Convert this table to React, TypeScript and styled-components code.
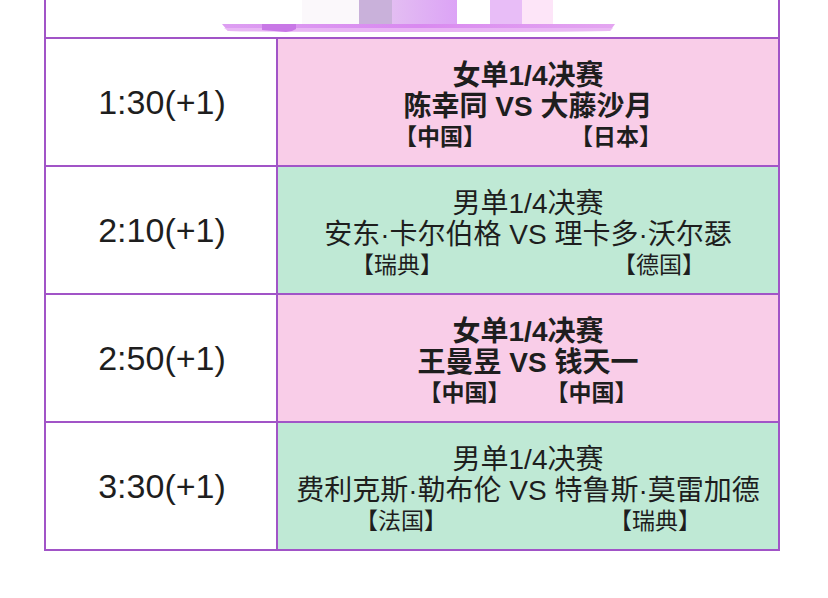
import React from "react";
import styled, { createGlobalStyle } from "styled-components";

const GlobalStyle = createGlobalStyle`
  html, body {
    margin: 0;
    padding: 0;
    background: #ffffff;
  }
  body {
    font-family: "Liberation Sans", "Noto Sans CJK SC", sans-serif;
    color: #222222;
  }
`;

const BORDER = "#a154c7";

const Page = styled.div`
  width: 828px;
  height: 598px;
  overflow: hidden;
  background: #ffffff;
`;

const Table = styled.div`
  margin-left: 44px;
  width: 736px;
  box-sizing: border-box;
  border-left: 2px solid ${BORDER};
  border-right: 2px solid ${BORDER};
  border-bottom: 2px solid ${BORDER};
  display: flex;
  flex-direction: column;
`;

const HeaderCell = styled.div`
  height: 37px;
  display: flex;
  align-items: flex-start;
  padding-left: 176px;
  background: #ffffff;
  overflow: hidden;
`;

const Row = styled.div`
  display: grid;
  grid-template-columns: 232px 1fr;
  height: 126px;
  border-top: 2px solid ${BORDER};
`;

const TimeCell = styled.div`
  display: flex;
  align-items: center;
  justify-content: center;
  background: #ffffff;
  border-right: 2px solid ${BORDER};
  font-family: "Liberation Sans", sans-serif;
  font-size: 34px;
  color: #1e1e1e;
  padding-left: 2px;
`;

const MatchCell = styled.div<{ $tone: "pink" | "green"; $bold: boolean }>`
  display: flex;
  flex-direction: column;
  align-items: center;
  justify-content: center;
  padding-top: 8px;
  box-sizing: border-box;
  background: ${(p) => (p.$tone === "pink" ? "#f9cde8" : "#bfe9d5")};
  font-weight: ${(p) => (p.$bold ? 700 : 400)};
  color: #1e1e1e;
`;

const Line = styled.div`
  font-size: 28px;
  line-height: 31px;
  white-space: nowrap;
`;

const Countries = styled.div<{ $gap: number }>`
  display: flex;
  justify-content: center;
  gap: ${(p) => p.$gap}px;
  font-size: 23px;
  line-height: 31px;
  white-space: nowrap;
`;

const Trophy = () => (
  <svg width="400" height="37" viewBox="0 0 400 37">
    <defs>
      <linearGradient id="bar2" x1="0" x2="1" y1="0" y2="0">
        <stop offset="0" stopColor="#e3bdf2" />
        <stop offset="1" stopColor="#dca3f6" />
      </linearGradient>
      <linearGradient id="base" x1="0" x2="1" y1="0" y2="0">
        <stop offset="0" stopColor="#dd9ef2" />
        <stop offset="0.5" stopColor="#d98af0" />
        <stop offset="1" stopColor="#e4a6f1" />
      </linearGradient>
    </defs>
    <rect x="80" y="0" width="57" height="24" fill="#fbf8fb" />
    <rect x="137" y="0" width="33" height="24" fill="#c9b1da" />
    <rect x="170" y="0" width="65" height="24" fill="url(#bar2)" />
    <rect x="268" y="0" width="32" height="24" fill="#e8bdf7" />
    <rect x="300" y="0" width="31" height="24" fill="#fde5f8" />
    <path d="M0 24 L393 24 L388 31 Q200 33 6 31 Z" fill="url(#base)" />
    <path d="M2 28 L391 28 L388 31 Q200 33 6 31 Z" fill="#ebbdf5" opacity="0.8" />
    <path d="M40 24 L74 24 L74 29 L70 31 L64 32 L40 30 Z" fill="#c878e6" />
  </svg>
);

type Match = {
  time: string;
  tone: "pink" | "green";
  bold: boolean;
  title: string;
  players: string;
  left: string;
  right: string;
  gap: number;
};

const matches: Match[] = [
  {
    time: "1:30(+1)",
    tone: "pink",
    bold: true,
    title: "女单1/4决赛",
    players: "陈幸同 VS 大藤沙月",
    left: "【中国】",
    right: "【日本】",
    gap: 84,
  },
  {
    time: "2:10(+1)",
    tone: "green",
    bold: false,
    title: "男单1/4决赛",
    players: "安东·卡尔伯格 VS 理卡多·沃尔瑟",
    left: "【瑞典】",
    right: "【德国】",
    gap: 170,
  },
  {
    time: "2:50(+1)",
    tone: "pink",
    bold: true,
    title: "女单1/4决赛",
    players: "王曼昱 VS 钱天一",
    left: "【中国】",
    right: "【中国】",
    gap: 35,
  },
  {
    time: "3:30(+1)",
    tone: "green",
    bold: false,
    title: "男单1/4决赛",
    players: "费利克斯·勒布伦 VS 特鲁斯·莫雷加德",
    left: "【法国】",
    right: "【瑞典】",
    gap: 162,
  },
];

export default function App() {
  return (
    <Page>
      <GlobalStyle />
      <Table>
        <HeaderCell>
          <Trophy />
        </HeaderCell>
        {matches.map((m) => (
          <Row key={m.time}>
            <TimeCell>{m.time}</TimeCell>
            <MatchCell $tone={m.tone} $bold={m.bold}>
              <Line>{m.title}</Line>
              <Line>{m.players}</Line>
              <Countries $gap={m.gap}>
                <span>{m.left}</span>
                <span>{m.right}</span>
              </Countries>
            </MatchCell>
          </Row>
        ))}
      </Table>
    </Page>
  );
}
